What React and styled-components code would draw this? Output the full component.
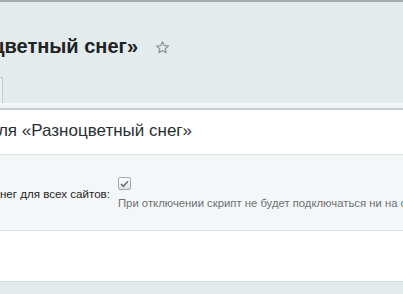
import React from "react";
import styled, { createGlobalStyle } from "styled-components";

const Global = createGlobalStyle`
  html, body { margin: 0; padding: 0; }
  body {
    width: 403px;
    height: 294px;
    overflow: hidden;
    background: #ffffff;
    font-family: "Liberation Sans", Arial, sans-serif;
  }
`;

const Page = styled.div`
  display: flex;
  flex-direction: column;
  width: 403px;
  height: 294px;
  overflow: hidden;
`;

const Header = styled.header`
  background: #e4ebed;
  border-top: 2px solid #a3abae;
  padding-top: 32px;
  display: flex;
  flex-direction: column;
`;

const TitleRow = styled.div`
  display: flex;
  align-items: center;
  height: 24px;
`;

const TitleBox = styled.div`
  width: 138px;
  display: flex;
  justify-content: flex-end;
`;

const Title = styled.h1`
  margin: 0;
  white-space: nowrap;
  font-size: 20px;
  line-height: 24px;
  font-weight: bold;
  color: #1f2325;
`;

const Star = styled.svg`
  margin-left: 17px;
  margin-top: 2px;
  width: 15px;
  height: 15px;
`;

const Tabs = styled.div`
  margin-top: 19px;
  height: 26px;
  display: flex;
`;

const Tab = styled.div`
  width: 120px;
  margin-left: -118px;
  background: #eaf0f1;
  border-right: 1px solid #c3cbce;
  border-top: 1px solid #c3cbce;
`;

const Band = styled.div`
  height: 5px;
  background: linear-gradient(#f4f7f8, #edf2f3);
  border-bottom: 2px solid #c6ced1;
`;

const Panel = styled.section`
  background: #ffffff;
  display: flex;
  flex-direction: column;
`;

const HeadingRow = styled.div`
  height: 33px;
  padding-top: 11px;
  border-bottom: 1px solid #dde3e5;
  display: flex;
`;

const HeadingBox = styled.div`
  width: 192px;
  display: flex;
  justify-content: flex-end;
`;

const Heading = styled.h2`
  margin: 0;
  white-space: nowrap;
  font-size: 17px;
  line-height: 20px;
  font-weight: normal;
  color: #2b2f31;
`;

const FormArea = styled.div`
  background: #f4f7f8;
  height: 76px;
  border-bottom: 1px solid #dde3e5;
  padding-top: 21px;
  box-sizing: border-box;
  display: grid;
  grid-template-columns: 110px 1fr;
  column-gap: 8px;
  align-items: start;
`;

const LabelCell = styled.div`
  display: flex;
  justify-content: flex-end;
  padding-top: 10px;
`;

const Label = styled.label`
  white-space: nowrap;
  font-size: 11.6px;
  line-height: 15px;
  color: #1e1e1e;
`;

const ControlCell = styled.div`
  display: flex;
  flex-direction: column;
  align-items: flex-start;
  gap: 6px;
  padding-top: 1px;
`;

const Check = styled.span`
  box-sizing: border-box;
  width: 13px;
  height: 13px;
  border: 1px solid #a2a9ac;
  border-radius: 2px;
  background: linear-gradient(#ffffff, #dfe3e5);
  display: flex;
  align-items: center;
  justify-content: center;
`;

const Hint = styled.div`
  white-space: nowrap;
  font-size: 11.3px;
  line-height: 14px;
  color: #6c7173;
`;

const Spacer = styled.div`
  height: 50px;
  background: #ffffff;
  border-bottom: 1px solid #d3dadd;
`;

const Footer = styled.footer`
  flex: 1;
  background: #e4ebed;
`;

export default function App() {
  return (
    <Page>
      <Global />
      <Header>
        <TitleRow>
          <TitleBox>
            <Title>Модуль «Разноцветный снег»</Title>
          </TitleBox>
          <Star viewBox="0 0 24 24">
            <path
              d="M12 2.8l2.7 6.1 6.6.6-5 4.4 1.5 6.5L12 17l-5.8 3.4 1.5-6.5-5-4.4 6.6-.6z"
              fill="none"
              stroke="#8e979b"
              strokeWidth="2"
              strokeLinejoin="round"
            />
          </Star>
        </TitleRow>
        <Tabs>
          <Tab />
        </Tabs>
        <Band />
      </Header>
      <Panel>
        <HeadingRow>
          <HeadingBox>
            <Heading>Настройки модуля «Разноцветный снег»</Heading>
          </HeadingBox>
        </HeadingRow>
        <FormArea>
          <LabelCell>
            <Label>Включить разноцветный снег для всех сайтов:</Label>
          </LabelCell>
          <ControlCell>
            <Check>
              <svg width="9" height="8" viewBox="0 0 9 8">
                <path d="M1 4l2.3 2.3L8 1.3" fill="none" stroke="#6b7275" strokeWidth="1.6" />
              </svg>
            </Check>
            <Hint>При отключении скрипт не будет подключаться ни на одном сайте</Hint>
          </ControlCell>
        </FormArea>
        <Spacer />
      </Panel>
      <Footer />
    </Page>
  );
}
